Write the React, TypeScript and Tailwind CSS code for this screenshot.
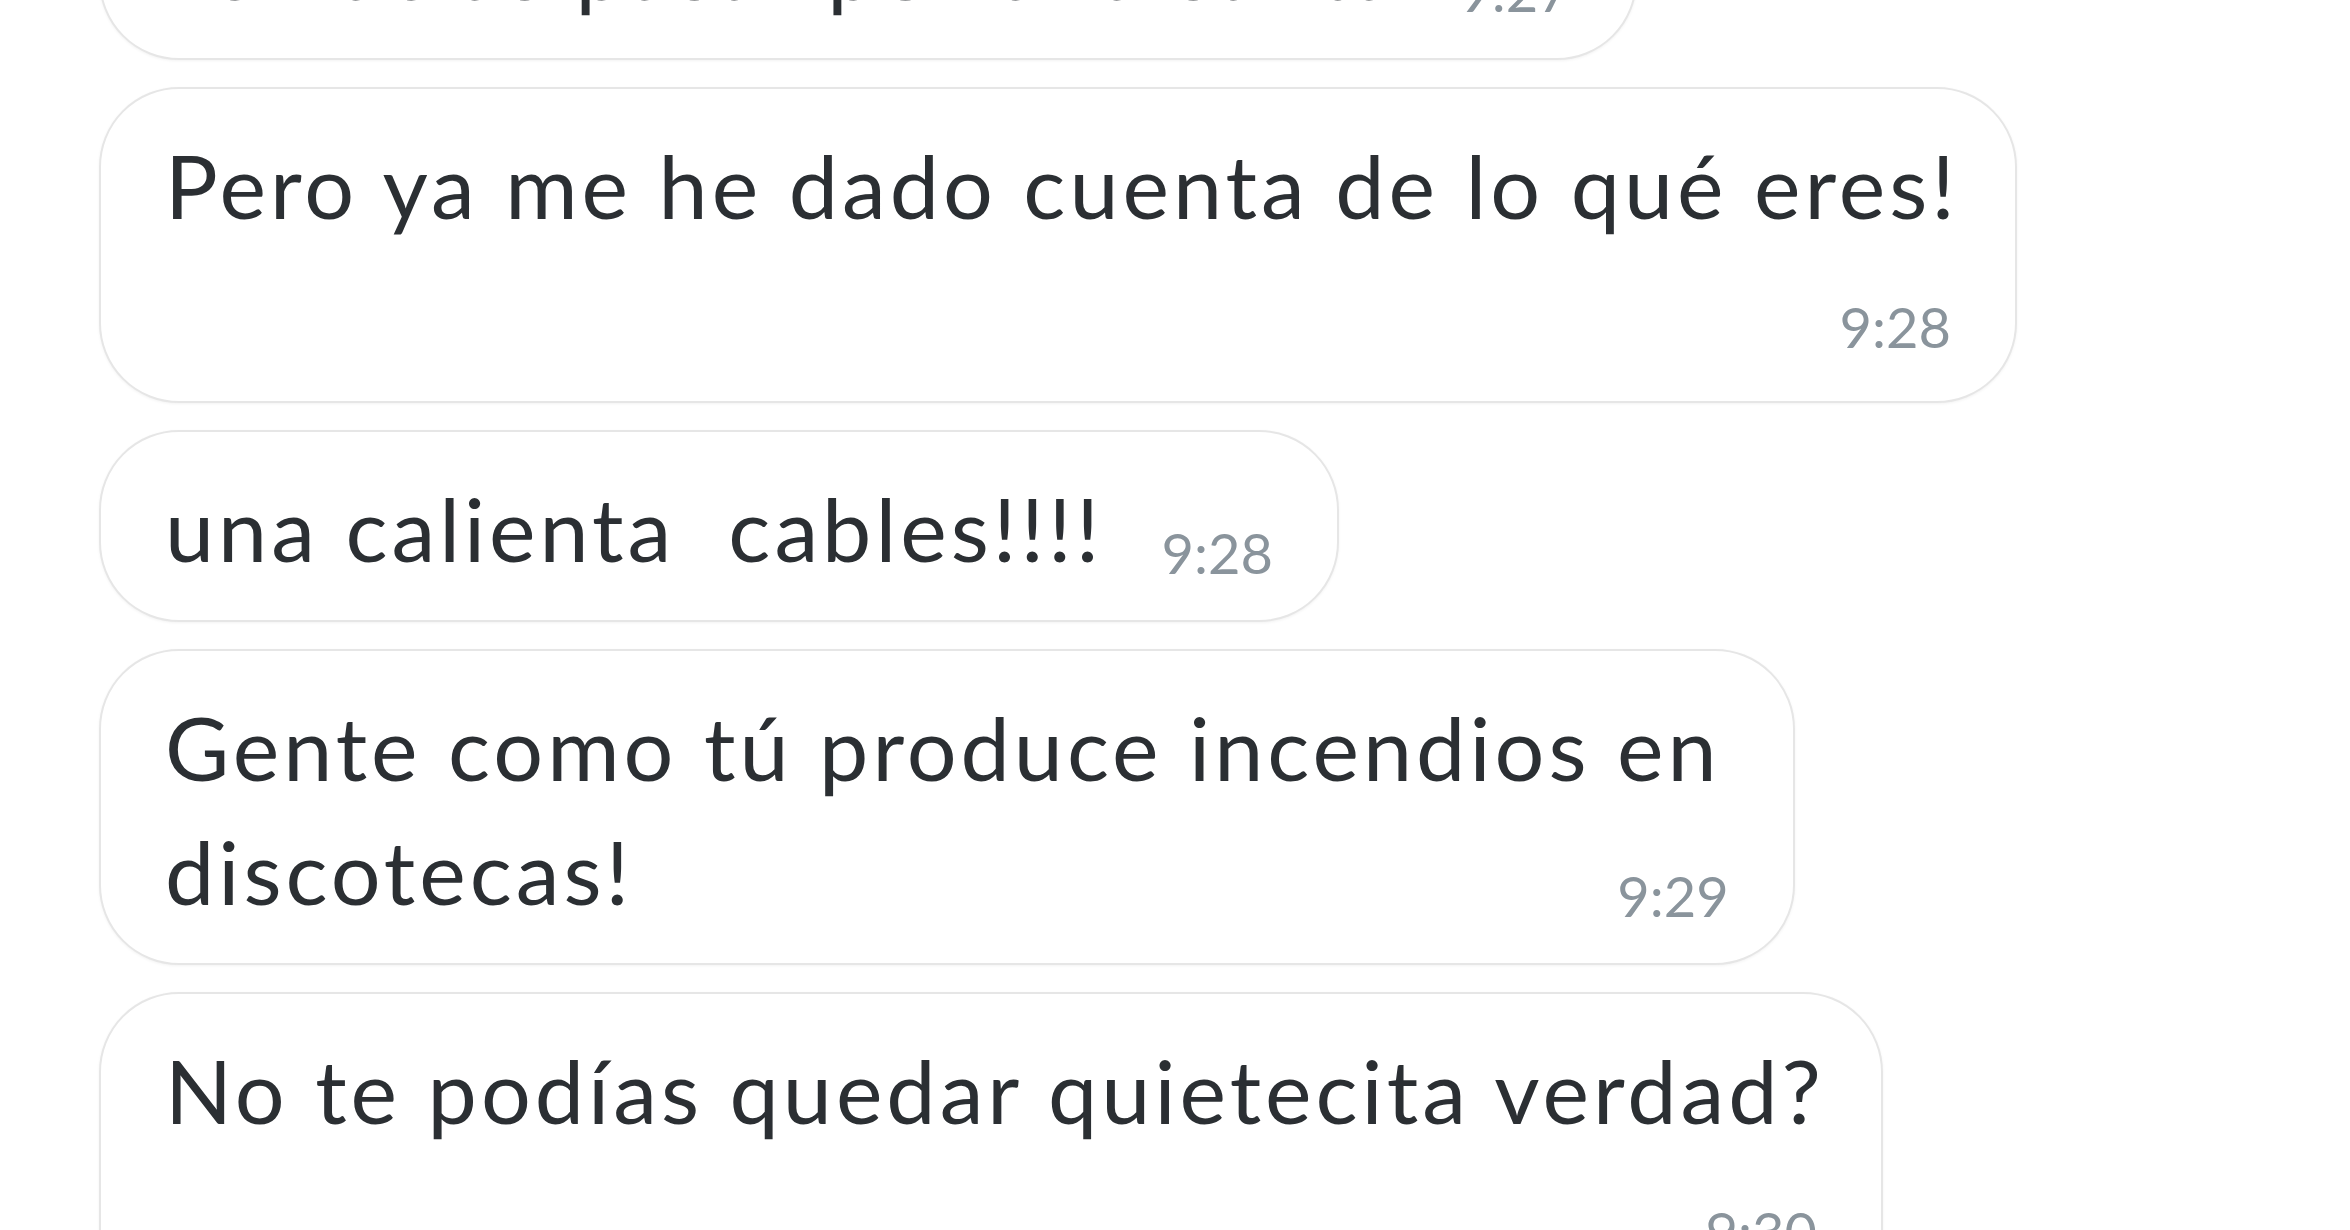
type Msg = {
  lines: string[]
  time: string
  mode: 'inline' | 'below' | 'last'
}

const messages: Msg[] = [
  { lines: ['Te hacías pasar por una santa'], time: '9:27', mode: 'inline' },
  { lines: ['Pero ya me he dado cuenta de lo qué eres!'], time: '9:28', mode: 'below' },
  { lines: ['una calienta  cables!!!!'], time: '9:28', mode: 'inline' },
  { lines: ['Gente como tú produce incendios en', 'discotecas!'], time: '9:29', mode: 'last' },
  { lines: ['No te podías quedar quietecita verdad?'], time: '9:30', mode: 'below' },
]

function Time({ value, offset }: { value: string; offset: 'inline' | 'below' }) {
  return (
    <span
      className={
        offset === 'inline'
          ? 'relative top-[12px] mr-[8px] text-[56px] leading-none tracking-normal text-[#8a949c]'
          : 'relative top-[5px] mr-[8px] text-[56px] leading-none tracking-normal text-[#8a949c]'
      }
    >
      {value}
    </span>
  )
}

function Bubble({ m }: { m: Msg }) {
  return (
    <div className="flex flex-col rounded-[80px] border-2 border-[#e6e6e6] bg-white pt-[34px] pb-[30px] pl-[64px] pr-[56px] shadow-[0_1px_3px_rgba(0,0,0,0.05)]">
      {m.mode === 'inline' && (
        <div className="whitespace-pre leading-[124px]">
          {m.lines[0]}
          <span className="ml-[58px]" />
          <Time value={m.time} offset="inline" />
        </div>
      )}
      {m.mode === 'below' && (
        <>
          <div className="whitespace-pre leading-[124px]">{m.lines[0]}</div>
          <div className="text-right leading-[124px]">
            <Time value={m.time} offset="below" />
          </div>
        </>
      )}
      {m.mode === 'last' && (
        <>
          <div className="whitespace-pre pr-[16px] leading-[124px]">{m.lines[0]}</div>
          <div className="flex items-baseline justify-between whitespace-pre leading-[124px]">
            <span>{m.lines[1]}</span>
            <Time value={m.time} offset="inline" />
          </div>
        </>
      )}
    </div>
  )
}

export default function App() {
  return (
    <div className="h-[1230px] w-[2350px] overflow-hidden bg-white font-['Lato',sans-serif] text-[88px] tracking-[4px] text-[#2b2f33]">
      <div className="mt-[-132px] flex flex-col items-start gap-[27px] pl-[99px]">
        {messages.map((m, i) => (
          <Bubble key={i} m={m} />
        ))}
      </div>
    </div>
  )
}
